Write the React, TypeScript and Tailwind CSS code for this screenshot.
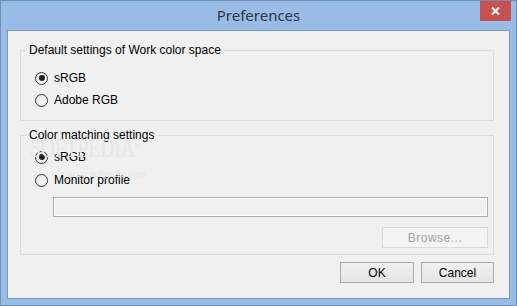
function Radio({ checked, label }: { checked?: boolean; label: string }) {
  return (
    <div className="flex h-[16px] items-center gap-[6px]">
      <span className="flex h-[13px] w-[13px] items-center justify-center rounded-full border border-[#333333] bg-gradient-to-br from-[#e6e6e6] to-[#ffffff]">
        {checked && <span className="h-[6px] w-[6px] rounded-full bg-[#1e1e1e]" />}
      </span>
      <span className="text-[12px] leading-[16px] text-black">{label}</span>
    </div>
  );
}

function Button({ label, disabled, className }: { label: string; disabled?: boolean; className: string }) {
  return (
    <div
      className={`flex items-center justify-center border text-[12px] leading-none ${
        disabled
          ? "border-[#d9d9d9] bg-[#f4f4f4] text-[#a3a3a3] tracking-[0.5px]"
          : "border-[#acacac] bg-gradient-to-b from-[#f0f0f0] to-[#e5e5e5] text-black"
      } ${className}`}
    >
      {label}
    </div>
  );
}

export default function App() {
  return (
    <div
      className="relative flex h-[306px] w-[517px] flex-col border border-[#6f8db5] bg-[#99bce7]"
      style={{ fontFamily: '"Liberation Sans", Arial, sans-serif' }}
    >
      {/* Title bar */}
      <div className="grid h-[29px] grid-cols-[1fr_auto_1fr]">
        <div />
        <div
          className="self-center pb-[1px] text-[15px] text-[#2c3440]"
          style={{ fontFamily: '"Noto Sans", "Open Sans", sans-serif' }}
        >
          Preferences
        </div>
        <div className="flex justify-end pr-[5px]">
          <div className="flex h-[20px] w-[31px] items-center justify-center bg-[#c75050]">
            <svg width="9" height="8" viewBox="0 0 9 8">
              <path d="M1 0.5 L8 7.5 M8 0.5 L1 7.5" stroke="white" strokeWidth="2" />
            </svg>
          </div>
        </div>
      </div>

      {/* Client area */}
      <div className="mx-[6px] flex h-[269px] flex-col border border-[#7d9cc3] bg-[#f0f0f0]">
        <fieldset className="ml-[12px] mt-[12px] w-[474px] border border-[#dcdcdc] p-0 pb-[12px] pl-[14px]">
          <legend className="-ml-[9px] px-[3px] text-[12px] leading-[14px] text-black">
            Default settings of Work color space
          </legend>
          <div className="mt-[13px] flex flex-col gap-[6px]">
            <Radio checked label="sRGB" />
            <Radio label="Adobe RGB" />
          </div>
        </fieldset>

        <fieldset className="ml-[12px] mt-[7px] w-[474px] border border-[#dcdcdc] p-0 pb-[6px] pl-[14px] pr-[5px]">
          <legend className="-ml-[9px] px-[3px] text-[12px] leading-[14px] text-black">
            Color matching settings
          </legend>
          <div className="mt-[7px] flex flex-col gap-[7px]">
            <Radio checked label="sRGB" />
            <Radio label="Monitor profile" />
          </div>
          <div className="ml-[18px] mt-[9px] h-[20px] border border-[#adadad] bg-[#f0f0f0] shadow-[inset_0_0_0_1px_#ffffff]" />
          <div className="mt-[10px] flex justify-end">
            <Button disabled label="Browse..." className="h-[21px] w-[106px]" />
          </div>
        </fieldset>

        <div className="mt-[7px] flex justify-end gap-[7px] pr-[15px]">
          <Button label="OK" className="h-[21px] w-[74px]" />
          <Button label="Cancel" className="h-[21px] w-[73px]" />
        </div>
      </div>

      {/* watermark */}
      <div className="pointer-events-none absolute left-[29px] top-[133px] select-none">
        <div
          className="origin-left scale-x-[0.72] whitespace-nowrap text-[27px] leading-[28px] text-[#e6e6e6]"
          style={{ fontFamily: '"Liberation Serif", serif' }}
        >
          SOFTPEDIA<span className="align-top text-[8px]">™</span>
        </div>
        <div className="ml-[38px] mt-[7px] text-[9px] leading-[10px] text-[#e6e6e6]">www.softpedia.com</div>
      </div>
    </div>
  );
}
